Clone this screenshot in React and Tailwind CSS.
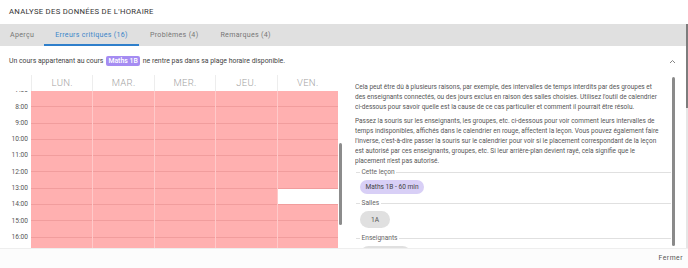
import React from "react";

const hours = ["7:00","8:00","9:00","10:00","11:00","12:00","13:00","14:00","15:00","16:00","17:00"];
const labels = ["7:00","8:00","9:00","10:00","11:00","12:00","13:00","14:00","15:00","16:00"];
const days = ["LUN.","MAR.","MER.","JEU.","VEN."];

const p1 = [
  "Cela peut être dû à plusieurs raisons, par exemple, des intervalles de temps interdits par des groupes et",
  "des enseignants connectés, ou des jours exclus en raison des salles choisies. Utilisez l'outil de calendrier",
  "ci-dessous pour savoir quelle est la cause de ce cas particulier et comment il pourrait être résolu.",
];
const p2 = [
  "Passez la souris sur les enseignants, les groupes, etc. ci-dessous pour voir comment leurs intervalles de",
  "temps indisponibles, affichés dans le calendrier en rouge, affectent la leçon. Vous pouvez également faire",
  "l'inverse, c'est-à-dire passer la souris sur le calendrier pour voir si le placement correspondant de la leçon",
  "est autorisé par ces enseignants, groupes, etc. Si leur arrière-plan devient rayé, cela signifie que le",
  "placement n'est pas autorisé.",
];

function Legend({ label }) {
  return (
    <div className="flex items-center h-[10px] text-[6.6px] text-[#666]">
      <div className="w-[4px] h-px bg-[#e0e0e0]" />
      <span className="px-[1.5px]">{label}</span>
      <div className="flex-1 h-px bg-[#e0e0e0]" />
    </div>
  );
}

export default function App() {
  return (
    <div className="w-[688px] h-[268px] bg-white overflow-hidden flex flex-col" style={{ fontFamily: "Roboto, 'Liberation Sans', sans-serif" }}>
      <div className="h-[24px] px-[9px] flex items-center text-[7.7px] tracking-[0.3px] text-[#333]">
        ANALYSE DES DONNÉES DE L'HORAIRE
      </div>
      <div className="flex h-[224px]">
        <div className="w-[686px] flex flex-col">
          <div className="h-[22px] bg-[#e0e0e0] flex text-[7.1px] tracking-[0.3px] text-[#777]">
            <div className="px-[10px] flex items-center">Aperçu</div>
            <div className="px-[11px] flex items-center text-[#3c86c9] border-b-2 border-[#2f7fcb] pt-[2px]">Erreurs critiques (16)</div>
            <div className="px-[11px] flex items-center">Problèmes (4)</div>
            <div className="px-[11px] flex items-center">Remarques (4)</div>
          </div>
          <div className="flex-1 flex flex-col">
            <div className="mt-[8px] h-[14px] flex items-center justify-between pl-[9px] pr-[10px] text-[6.9px] text-[#444]">
              <div className="flex items-center">
                <span>Un cours appartenant au cours</span>
                <span className="mx-[3px] px-[2px] h-[10px] leading-[10px] rounded-[2px] bg-[#a58cf2] text-white font-medium">Maths 1B</span>
                <span>ne rentre pas dans sa plage horaire disponible.</span>
              </div>
              <svg width="7" height="5" viewBox="0 0 7 5" className="text-[#777]">
                <polyline points="1,4 3.5,1.5 6,4" fill="none" stroke="currentColor" strokeWidth="0.9" />
              </svg>
            </div>
            <div className="flex-1 flex">
              {/* Calendar */}
              <div className="w-[344px] flex flex-col pt-[7px]">
                <div className="h-[16px] flex text-[9.5px] text-[#a3a3a3] tracking-[0.3px] font-light">
                  <div className="w-[31px]" />
                  {days.map((d) => (
                    <div key={d} className="w-[61.4px] border-l border-[#ededed] flex items-center justify-center">{d}</div>
                  ))}
                </div>
                <div className="h-[157px] flex overflow-hidden">
                  <div className="w-[31px] flex flex-col -mt-[8px] text-[6.6px] text-[#555]">
                    {labels.map((h) => (
                      <div key={h} className="h-[16.3px] shrink-0 flex items-center justify-end pr-[3px]">{h}</div>
                    ))}
                  </div>
                  <div className="w-[307px] flex">
                    {days.map((d, di) => (
                      <div key={d} className={"w-[61.4px] flex flex-col " + (di > 0 ? "border-l border-[#ffc9c9]" : "")}>
                        {hours.map((h, hi) => (
                          <div
                            key={h}
                            className={
                              "h-[16.3px] shrink-0 border-b border-[#f19d9d] " +
                              (di === 4 && hi === 6 ? "bg-white" : "bg-[#ffb0b0]")
                            }
                          />
                        ))}
                      </div>
                    ))}
                  </div>
                  <div className="w-[6px] pl-[1px] flex flex-col">
                    <div className="h-[52px]" />
                    <div className="w-[3px] h-[82px] rounded-[2px] bg-[#8c8c8c]" />
                  </div>
                </div>
              </div>
              {/* Right panel */}
              <div className="flex-1 flex pt-[9px] pl-[11px]">
                <div className="w-[317px] h-[171px] overflow-hidden pt-[5px] text-[6.5px] leading-[10px] text-[#555]">
                  <div>
                    {p1.map((l, i) => (
                      <div key={i} className="whitespace-nowrap">{l}</div>
                    ))}
                  </div>
                  <div className="mt-[4px]">
                    {p2.map((l, i) => (
                      <div key={i} className="whitespace-nowrap">{l}</div>
                    ))}
                  </div>
                  <div className="mt-[1px] pl-[1px] pr-[1px]">
                    <Legend label="Cette leçon" />
                    <div className="mt-[3px] ml-[4px] w-[64px] h-[14px] rounded-full bg-[#d8cff6] text-[#444] text-[6.6px] flex items-center justify-center">Maths 1B - 60 min</div>
                    <div className="mt-[4px]"><Legend label="Salles" /></div>
                    <div className="mt-[3px] ml-[4px] w-[30px] h-[17px] rounded-full bg-[#e0e0e0] text-[#555] text-[6.6px] flex items-center justify-center">1A</div>
                    <div className="mt-[5px]"><Legend label="Enseignants" /></div>
                    <div className="mt-[3px] ml-[4px] w-[51px] h-[17px] rounded-full bg-[#e0e0e0]" />
                  </div>
                </div>
                <div className="w-[3px] h-[169px] rounded-[2px] bg-[#8a8a8a]" />
              </div>
            </div>
          </div>
        </div>
        <div className="w-[2px] flex flex-col bg-[#e6e6e6]">
          <div className="h-[84px] bg-[#7d7d7d]" />
        </div>
      </div>
      <div className="h-[20px] border-t border-[#eeeeee] bg-[#fcfcfc] flex items-center justify-end pr-[5px] text-[6.8px] tracking-[0.5px] text-[#555]">
        Fermer
      </div>
    </div>
  );
}
